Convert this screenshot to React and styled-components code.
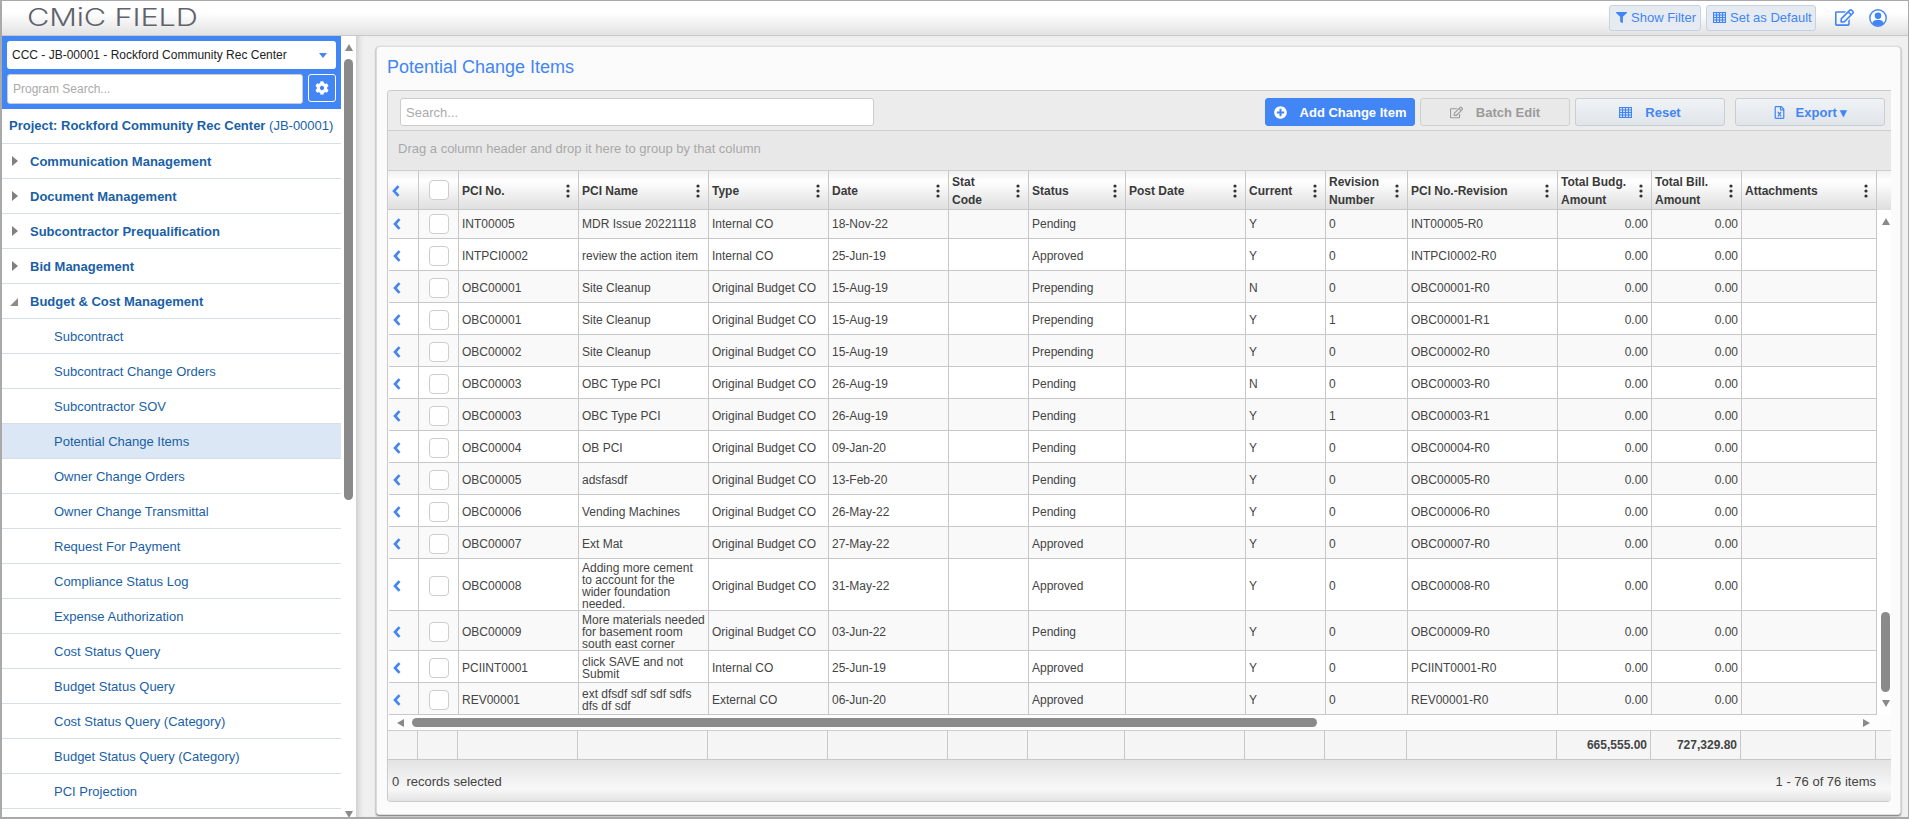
import React from 'react';
import styled, { createGlobalStyle, css } from 'styled-components';
import { FaCog, FaFilter, FaRegEdit, FaPlusCircle, FaRegFileExcel } from 'react-icons/fa';

const Global = createGlobalStyle`
  html, body { margin: 0; padding: 0; overflow: hidden; background: #fff; }
  * { box-sizing: border-box; }
  body { font-family: "Liberation Sans", Arial, sans-serif; }
`;

const COLS = '31px 40px 120px 130px 120px 120px 80px 97px 120px 80px 82px 150px 94px 90px 135px';
const BODY_COLS = '30px 40px 120px 130px 120px 120px 80px 97px 120px 80px 82px 150px 94px 90px 135px';
const BLUE = '#4285f4';
const LINK = '#1a5fa6';

const Frame = styled.div`
  width: 1909px; height: 819px; display: flex; flex-direction: column;
  border-style: solid; border-color: #a9a9a9; border-width: 1px 1px 2px 2px; overflow: hidden;
`;
const TopBar = styled.header`
  height: 35px; flex: none; display: flex; align-items: center; padding: 0 21px 0 25px;
  border-bottom: 1px solid #c9c9c9;
  background: linear-gradient(#fff 35%, #e2e2e2);
`;
const Logo = styled.div`
  font-family: Inter, sans-serif; font-weight: 300; font-size: 24px; line-height: 30px; color: #5f636c;
  transform: scaleX(1.28); transform-origin: left center; letter-spacing: -0.1px; margin-top: -1px;
`;
const Spacer = styled.div`flex: 1;`;
const TopButton = styled.button`
  width: ${p => p.$w}px; height: 26px; padding: 0 0 0 6px; margin-right: 5px; margin-top: -1px; display: flex; align-items: center; gap: 4px;
  font: 13px "Liberation Sans", sans-serif; color: ${BLUE};
  border: 1px solid #c6d2df; border-radius: 3px; background: #e6ebf1;
  svg { flex: none; }
`;
const TopIcon = styled.span`
  display: flex; color: ${BLUE}; margin-left: ${p => p.$gap}px; margin-top: -1px;
`;
const Body = styled.div`flex: 1; display: flex; min-height: 0;`;
const Sidebar = styled.aside`width: 339px; flex: none; overflow: hidden; background: #fff;`;
const SideHead = styled.div`
  height: 73px; background: ${BLUE}; padding: 5px; display: flex; flex-wrap: wrap; align-content: flex-start; gap: 5px;
`;
const ProjectSelect = styled.div`
  width: 329px; height: 28px; background: #fff; border-radius: 3px; padding: 0 5px; color: #222;
  font-size: 12px; display: flex; align-items: center; justify-content: space-between;
`;
const Caret = styled.span`
  width: 0; height: 0; border-style: solid; border-width: 5px 4.5px 0; border-color: ${BLUE} transparent transparent; margin-right: 4px;
`;
const ProgramSearch = styled.div`
  width: 296px; height: 30px; background: #fff; border-radius: 3px; border: 1px solid #ccc; padding: 0 5px;
  color: #aaa; font-size: 12px; display: flex; align-items: center;
`;
const GearButton = styled.div`
  width: 28px; height: 28px; border: 1px solid #fff; border-radius: 3px; color: #fff;
  display: flex; align-items: center; justify-content: center; font-size: 14px;
`;
const ProjectRow = styled.div`
  height: 35px; padding: 0 0 1px 7px; display: flex; align-items: center; border-bottom: 1px solid #d6dee6;
  font-size: 13px; font-weight: 700; color: ${LINK}; white-space: pre;
  span { font-weight: 400; }
`;
const GroupRow = styled.div`
  height: 35px; flex: none; display: flex; align-items: center; padding-left: 8px; border-bottom: 1px solid #d6dee6;
  font-size: 13px; font-weight: 700; color: ${LINK};
`;
const Tri = styled.span`
  width: 0; height: 0; border-style: solid; flex: none;
  ${p => p.$open ? css`
    border-width: 0 0 8px 8px; border-color: transparent transparent #8c8c8c transparent; margin-right: 12px; margin-top: 2px;
  ` : css`
    border-width: 5px 0 5px 6px; border-color: transparent transparent transparent #808080; margin-left: 2px; margin-right: 12px;
  `}
`;
const SubRow = styled.div`
  height: 35px; display: flex; align-items: center; padding-left: 52px; border-bottom: 1px solid #d6dee6;
  font-size: 13px; color: ${LINK}; background: ${p => p.$active ? '#dbe7f4' : '#fff'};
`;
const VBar = styled.div`
  width: ${p => p.$w}px; flex: none; background: #fff; display: flex; flex-direction: column; align-items: ${p => p.$align || 'center'};
  padding-top: ${p => p.$top}px; padding-right: ${p => p.$right || 0}px;
`;
const ArrowUp = styled.span`
  width: 0; height: 0; border-style: solid; border-width: 0 4.5px 7px 4.5px; border-color: transparent transparent #8a8a8a transparent;
  margin-top: ${p => p.$mt || 0}px; flex: none;
`;
const ArrowDown = styled(ArrowUp)`
  border-width: 7px 4.5px 0 4.5px; border-color: #8a8a8a transparent transparent transparent;
`;
const VThumb = styled.div`
  width: 9px; height: ${p => p.$h}px; flex: none; background: #8a8a8a; border-radius: 5px; margin-top: ${p => p.$mt}px;
`;
const Content = styled.main`
  flex: 1; min-width: 0; padding: 10px 7px 1px 20px; background: #f0f0f0;
  box-shadow: inset 6px 0 5px -3px #cfcfcf;
`;
const Panel = styled.section`
  width: 1525px; height: 769px; background: #fbfbfb; border: 1px solid #dcdcdc; border-radius: 4px 4px 3px 3px;
  box-shadow: 0 1px 2px rgba(0,0,0,.55); padding: 0 9px 0 10px; display: flex; flex-direction: column;
`;
const Title = styled.h1`
  margin: 0; height: 43px; flex: none; font-size: 18px; font-weight: 400; color: ${BLUE}; line-height: 40px;
`;
const Grid = styled.div`
  flex: none; width: 1504px; height: 712px; border: 1px solid #cbcbcb; border-right: 0; border-radius: 4px 0 4px 4px; display: flex; flex-direction: column; overflow: hidden;
`;
const Toolbar = styled.div`
  height: 40px; flex: none; display: flex; align-items: center; padding: 3px 6px 0 12px; gap: 5px; background: #ececec; border-bottom: 1px solid #cfcfcf;
`;
const SearchBox = styled.div`
  width: 474px; height: 28px; background: #fff; border: 1px solid #ccc; border-radius: 3px; padding: 0 5px; display: flex; align-items: center;
  font-size: 13px; color: #aaa; margin-right: auto;
`;
const ActionButton = styled.button`
  width: 150px; height: 28px; display: flex; align-items: center; justify-content: center; gap: ${p => p.$gap || 13}px; border-radius: 3px; padding: 0;
  font: 700 13px "Liberation Sans", sans-serif; margin-left: ${p => p.$ml || 0}px;
  ${p => p.$kind === 'primary' && css`background: ${BLUE}; color: #fff; border: 1px solid ${BLUE};`}
  ${p => p.$kind === 'disabled' && css`background: #e9e9e9; color: #9a9a9a; border: 1px solid #cfcfcf;`}
  ${p => p.$kind === 'normal' && css`background: linear-gradient(#f0f3f6, #e0e5ea); color: ${BLUE}; border: 1px solid #c9ced4;`}
  svg { font-size: 13px; flex: none; }
`;
const GroupBar = styled.div`
  height: 40px; flex: none; display: flex; align-items: center; padding: 0 10px 4px 10px; font-size: 13px; color: #a8a8a8;
  background: #e9e8e8; border-bottom: 1px solid #cfcfcf;
`;
const HeaderRow = styled.div`
  height: 39px; flex: none; display: grid; grid-template-columns: ${COLS}; background: linear-gradient(#f0f0f0, #fff 25%, #dedede);
`;
const HeaderCell = styled.div`
  display: flex; align-items: center; justify-content: space-between; padding: 1px 8px 0 3px; border-right: 1px solid #c8c8c8; border-bottom: 1px solid #c8c8c8;
  font-size: 12px; font-weight: 700; color: #3a3a3a; line-height: 18px;
`;
const HeaderArrow = styled(HeaderCell)`padding: 1px 0 0 4px; justify-content: flex-start;`;
const HeaderCheck = styled(HeaderCell)`padding: 0; justify-content: center;`;
const DotsSvg = styled.svg`flex: none;`;
const Dots = () => (
  <DotsSvg width="4" height="14" viewBox="0 0 4 14">
    <circle cx="2" cy="2" r="1.6" fill="#333" /><circle cx="2" cy="7" r="1.6" fill="#333" /><circle cx="2" cy="12" r="1.6" fill="#333" />
  </DotsSvg>
);
const BodyWrap = styled.div`height: 505px; flex: none; display: flex; overflow: hidden;`;
const Rows = styled.div`width: 1489px; flex: none; padding-left: 1px; margin-top: -3px;`;
const Row = styled.div`
  display: grid; grid-template-columns: ${BODY_COLS};
  min-height: 32px; background: ${p => p.$odd ? '#f9f9f9' : '#fff'};
`;
const Cell = styled.div`
  display: flex; align-items: center; padding: 3px 3px 0 3px; border-right: 1px solid #c8c8c8; border-bottom: 1px solid #c8c8c8;
  font-size: 12px; line-height: 12px; color: #444; justify-content: ${p => p.$right ? 'flex-end' : 'flex-start'};
`;
const CheckCell = styled(Cell)`justify-content: center; padding: 3px 0 0;`;
const ArrowCell = styled(Cell)`padding: 2px 0 0 4px;`;
const Check = styled.span`
  width: 20px; height: 20px; background: #fff; border: 1px solid #cdcdcd; border-radius: 4px; display: block;
`;
const Chevron = () => (
  <svg width="8" height="12" viewBox="0 0 8 12"><path d="M6.5 1.2 2 6l4.5 4.8" fill="none" stroke="#4285f4" strokeWidth="2.6" /></svg>
);
const GridIcon = () => (
  <svg width="13" height="11" viewBox="0 0 13 11" fill="none" stroke="#4285f4" strokeWidth="1">
    <rect x="0.5" y="0.5" width="12" height="10" fill="#4285f4" fillOpacity="0.15" />
    <path d="M0 3h13M0 5.5h13M0 8h13M3.5 0v11M6.5 0v11M9.5 0v11" />
  </svg>
);
const HBar = styled.div`
  height: 16px; flex: none; display: flex; align-items: center; background: #fdfdfd; border-bottom: 1px solid #cfcfcf; padding: 0 21px 0 9px;
`;
const ArrowLeft = styled.span`
  width: 0; height: 0; flex: none; border-style: solid; border-width: 4.5px 7px 4.5px 0; border-color: transparent #8a8a8a transparent transparent;
`;
const ArrowRight = styled.span`
  width: 0; height: 0; flex: none; border-style: solid; border-width: 4.5px 0 4.5px 7px; border-color: transparent transparent transparent #8a8a8a; margin-left: auto;
`;
const HThumb = styled.div`width: 905px; height: 9px; flex: none; margin-left: 8px; background: #8a8a8a; border-radius: 5px;`;
const FooterRow = styled.div`
  height: 29px; flex: none; display: grid; grid-template-columns: ${BODY_COLS} 1fr; background: #f5f5f5;
`;
const FooterCell = styled.div`
  display: flex; align-items: center; justify-content: flex-end; padding: 0 3px; border-right: 1px solid #c8c8c8; border-bottom: 1px solid #c8c8c8; font-size: 12px; font-weight: 700; color: #444;
  &:last-child { border-right: 0; }
`;
const Pager = styled.div`
  height: 41px; flex: none; display: flex; align-items: center; justify-content: space-between; padding: 1px 15px 0 4px; font-size: 13px; color: #444; white-space: pre;
  background: linear-gradient(#e3e3e3, #f8f8f8 70%, #e4e4e4);
`;

const UserIcon = () => (
  <svg width="18" height="18" viewBox="0 0 18 18">
    <circle cx="9" cy="9" r="8.2" fill="#fff" stroke="#4285f4" strokeWidth="1.4" />
    <circle cx="9" cy="6.8" r="3.3" fill="#4285f4" />
    <path d="M3.2 14.2C4 11.6 6.3 10.8 9 10.8s5 .8 5.8 3.4A8 8 0 0 1 9 17a8 8 0 0 1-5.8-2.8z" fill="#4285f4" />
  </svg>
);

const groups = ['Communication Management', 'Document Management', 'Subcontractor Prequalification', 'Bid Management'];
const subs = ['Subcontract', 'Subcontract Change Orders', 'Subcontractor SOV', 'Potential Change Items', 'Owner Change Orders', 'Owner Change Transmittal', 'Request For Payment', 'Compliance Status Log', 'Expense Authorization', 'Cost Status Query', 'Budget Status Query', 'Cost Status Query (Category)', 'Budget Status Query (Category)', 'PCI Projection'];
const headers = ['PCI No.', 'PCI Name', 'Type', 'Date', ['Stat', 'Code'], 'Status', 'Post Date', 'Current', ['Revision', 'Number'], 'PCI No.-Revision', ['Total Budg.', 'Amount'], ['Total Bill.', 'Amount'], 'Attachments'];
const OB = 'Original Budget CO';
const rows = [
  ['INT00005', 'MDR Issue 20221118', 'Internal CO', '18-Nov-22', 'Pending', 'Y', '0', 'INT00005-R0'],
  ['INTPCI0002', 'review the action item', 'Internal CO', '25-Jun-19', 'Approved', 'Y', '0', 'INTPCI0002-R0'],
  ['OBC00001', 'Site Cleanup', OB, '15-Aug-19', 'Prepending', 'N', '0', 'OBC00001-R0'],
  ['OBC00001', 'Site Cleanup', OB, '15-Aug-19', 'Prepending', 'Y', '1', 'OBC00001-R1'],
  ['OBC00002', 'Site Cleanup', OB, '15-Aug-19', 'Prepending', 'Y', '0', 'OBC00002-R0'],
  ['OBC00003', 'OBC Type PCI', OB, '26-Aug-19', 'Pending', 'N', '0', 'OBC00003-R0'],
  ['OBC00003', 'OBC Type PCI', OB, '26-Aug-19', 'Pending', 'Y', '1', 'OBC00003-R1'],
  ['OBC00004', 'OB PCI', OB, '09-Jan-20', 'Pending', 'Y', '0', 'OBC00004-R0'],
  ['OBC00005', 'adsfasdf', OB, '13-Feb-20', 'Pending', 'Y', '0', 'OBC00005-R0'],
  ['OBC00006', 'Vending Machines', OB, '26-May-22', 'Pending', 'Y', '0', 'OBC00006-R0'],
  ['OBC00007', 'Ext Mat', OB, '27-May-22', 'Approved', 'Y', '0', 'OBC00007-R0'],
  ['OBC00008', 'Adding more cement to account for the wider foundation needed.', OB, '31-May-22', 'Approved', 'Y', '0', 'OBC00008-R0'],
  ['OBC00009', 'More materials needed for basement room south east corner', OB, '03-Jun-22', 'Pending', 'Y', '0', 'OBC00009-R0'],
  ['PCIINT0001', 'click SAVE and not Submit', 'Internal CO', '25-Jun-19', 'Approved', 'Y', '0', 'PCIINT0001-R0'],
  ['REV00001', 'ext dfsdf sdf sdf sdfs dfs df sdf', 'External CO', '06-Jun-20', 'Approved', 'Y', '0', 'REV00001-R0'],
];

export default function App() {
  return (
    <Frame>
      <Global />
      <TopBar>
        <Logo>CMiC FIELD</Logo>
        <Spacer />
        <TopButton $w={92}><FaFilter size={11} />Show Filter</TopButton>
        <TopButton $w={110}><GridIcon />Set as Default</TopButton>
        <TopIcon $gap={14}><FaRegEdit size={19} /></TopIcon>
        <TopIcon $gap={15}><UserIcon /></TopIcon>
      </TopBar>
      <Body>
        <Sidebar>
          <SideHead>
            <ProjectSelect>CCC - JB-00001 - Rockford Community Rec Center<Caret /></ProjectSelect>
            <ProgramSearch>Program Search...</ProgramSearch>
            <GearButton><FaCog /></GearButton>
          </SideHead>
          <ProjectRow>Project: Rockford Community Rec Center <span>(JB-00001)</span></ProjectRow>
          {groups.map(g => <GroupRow key={g}><Tri />{g}</GroupRow>)}
          <GroupRow><Tri $open />Budget &amp; Cost Management</GroupRow>
          {subs.map(s => <SubRow key={s} $active={s === 'Potential Change Items'}>{s}</SubRow>)}
        </Sidebar>
        <VBar $w={15} $top={8}>
          <ArrowUp />
          <VThumb $h={441} $mt={8} />
          <ArrowDown $mt={311} />
        </VBar>
        <Content>
          <Panel>
            <Title>Potential Change Items</Title>
            <Grid>
              <Toolbar>
                <SearchBox>Search...</SearchBox>
                <ActionButton $kind="primary"><FaPlusCircle />Add Change Item</ActionButton>
                <ActionButton $kind="disabled"><FaRegEdit />Batch Edit</ActionButton>
                <ActionButton $kind="normal"><GridIcon />Reset</ActionButton>
                <ActionButton $kind="normal" $ml={5} $gap={10}><FaRegFileExcel /><span>Export ▾</span></ActionButton>
              </Toolbar>
              <GroupBar>Drag a column header and drop it here to group by that column</GroupBar>
              <HeaderRow>
                <HeaderArrow><Chevron /></HeaderArrow>
                <HeaderCheck><Check /></HeaderCheck>
                {headers.map((h, i) => (
                  <HeaderCell key={i}>
                    <span>{Array.isArray(h) ? <>{h[0]}<br />{h[1]}</> : h}</span>
                    <Dots />
                  </HeaderCell>
                ))}
              </HeaderRow>
              <BodyWrap>
                <Rows>
                  {rows.map((r, i) => (
                    <Row key={i} $odd={i % 2 === 0}>
                      <ArrowCell><Chevron /></ArrowCell>
                      <CheckCell><Check /></CheckCell>
                      <Cell>{r[0]}</Cell>
                      <Cell>{r[1]}</Cell>
                      <Cell>{r[2]}</Cell>
                      <Cell>{r[3]}</Cell>
                      <Cell />
                      <Cell>{r[4]}</Cell>
                      <Cell />
                      <Cell>{r[5]}</Cell>
                      <Cell>{r[6]}</Cell>
                      <Cell>{r[7]}</Cell>
                      <Cell $right>0.00</Cell>
                      <Cell $right>0.00</Cell>
                      <Cell />
                    </Row>
                  ))}
                </Rows>
                <VBar $w={14} $top={8} $align="flex-end" $right={1}>
                  <ArrowUp />
                  <VThumb $h={80} $mt={387} />
                  <ArrowDown $mt={8} />
                </VBar>
              </BodyWrap>
              <HBar><ArrowLeft /><HThumb /><ArrowRight /></HBar>
              <FooterRow>
                {Array.from({ length: 12 }).map((_, i) => <FooterCell key={i} />)}
                <FooterCell>665,555.00</FooterCell>
                <FooterCell>727,329.80</FooterCell>
                <FooterCell />
                <FooterCell />
              </FooterRow>
              <Pager><span>0  records selected</span><span>1 - 76 of 76 items</span></Pager>
            </Grid>
          </Panel>
        </Content>
      </Body>
    </Frame>
  );
}
